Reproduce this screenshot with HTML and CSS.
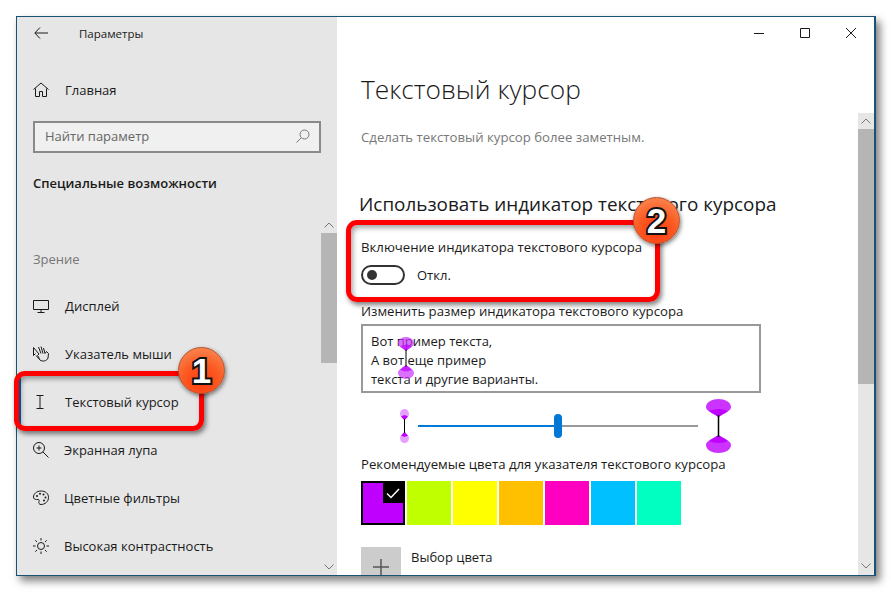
FILE: index.html
```html
<!DOCTYPE html>
<html lang="ru">
<head>
    <meta charset="UTF-8">
    <meta name="viewport" content="width=device-width, initial-scale=1.0">
    <title>Параметры</title>
    <link rel="stylesheet" href="styles.css">
</head>
<body>
    <svg class="defs" width="0" height="0">
        <symbol id="caret" viewBox="0 0 24 54" preserveAspectRatio="none">
            <path class="caret-glow" d="M0 8C0 3 6 0 12 0s12 3 12 8c0 4-6 6-12 10C6 14 0 12 0 8z"/>
            <path class="caret-core" d="M3 12c2-1 6-2 9-2s7 1 9 2c-3 2-6 4-9 6-3-2-6-4-9-6z"/>
            <path class="caret-glow" d="M0 46c0 5 6 8 12 8s12-3 12-8c0-4-6-6-12-10-6 4-12 6-12 10z"/>
            <path class="caret-core" d="M3 42c2 1 6 2 9 2s7-1 9-2c-3-2-6-4-9-6-3 2-6 4-9 6z"/>
            <path class="caret-line" d="M12 16V38"/>
        </symbol>
    </svg>

    <div class="window">
        <aside class="sidebar">
            <div class="sidebar-body">
                <div class="app-title">
                    <svg class="back" width="14" height="12" viewBox="0 0 14 12"><path d="M6 .5L.8 6 6 11.500M1 6H14"/></svg>
                    <span>Параметры</span>
                </div>

                <a class="nav-item home">
                    <svg class="icon" width="16" height="16" viewBox="0 0 16 16"><path d="M.5 7.500L8 1l7.500 6.500M2.500 6.500V14.500H6.500V9.500H9.500V14.500H13.500V6.500"/></svg>
                    <span>Главная</span>
                </a>

                <div class="search">
                    <span>Найти параметр</span>
                    <svg width="14" height="14" viewBox="0 0 14 14"><circle cx="8.500" cy="5.500" r="4.500"/><path d="M5.300 8.700L.5 13.500"/></svg>
                </div>

                <h2 class="group-title">Специальные возможности</h2>
                <div class="group-label">Зрение</div>

                <a class="nav-item">
                    <svg class="icon" width="16" height="16" viewBox="0 0 16 16"><path d="M.5 2.500H15.500V11.500H.5zM8 11.500V14.500M4.500 14.500H11.500"/></svg>
                    <span>Дисплей</span>
                </a>
                <a class="nav-item">
                    <svg class="icon" width="16" height="16" viewBox="0 0 16 16"><path d="M.5 1.500L6 8 4.500 9.500 6.500 12.500M.5 1.500V9.500L2.500 7.500M5.500 1L8 7.500M8 .5L10 7.500M10.500 2L12 7.500 13.500 5.500 15.500 7.500 15 12C14 15 9.500 16 7 14L3 9.500"/></svg>
                    <span>Указатель мыши</span>
                </a>
                <a class="nav-item is-active">
                    <svg class="icon" width="16" height="16" viewBox="0 0 16 16"><path d="M3.500 1.500H10.500M7 1.500V14.500M3.500 14.500H10.500"/></svg>
                    <span>Текстовый курсор</span>
                </a>
                <a class="nav-item tight">
                    <svg class="icon" width="16" height="16" viewBox="0 0 16 16"><circle cx="6" cy="6" r="5.500"/><path d="M9.800 9.800L15.500 15.500M3.500 6H8.500M6 3.500V8.500"/></svg>
                    <span>Экранная лупа</span>
                </a>
                <a class="nav-item tight">
                    <svg class="icon" width="16" height="16" viewBox="0 0 16 16"><path d="M8 1C3.500 1 .5 4 .5 7c0 1.500 1 2.500 3 2.500h1.500c1.200 0 1.500 1 1 2-.5 1.500 0 3 2 3 4 0 7.500-3 7.500-7C15.500 3.500 12.500 1 8 1z"/><circle class="dot" cx="4" cy="6" r="1"/><circle class="dot" cx="7" cy="3.800" r="1"/><circle class="dot" cx="10.500" cy="4.500" r="1"/><circle class="dot" cx="12.500" cy="7.500" r="1"/><circle class="dot" cx="11" cy="10.500" r="1"/></svg>
                    <span>Цветные фильтры</span>
                </a>
                <a class="nav-item tight">
                    <svg class="icon" width="16" height="16" viewBox="0 0 16 16"><circle cx="8" cy="8" r="3.500"/><path d="M8 0V2.500M8 13.500V16M0 8H2.500M13.500 8H16M2.300 2.300L4 4M12 12L13.700 13.700M2.300 13.700L4 12M12 4L13.700 2.300"/></svg>
                    <span>Высокая контрастность</span>
                </a>
            </div>

            <div class="scrollbar side-scroll">
                <div class="scroll-btn"><svg width="10" height="6" viewBox="0 0 10 6"><path d="M.5 5.500L5 1l4.500 4.500"/></svg></div>
                <div class="scroll-thumb"></div>
                <div class="scroll-btn scroll-end"><svg width="10" height="6" viewBox="0 0 10 6"><path d="M.5.5L5 5 9.500.5"/></svg></div>
            </div>
        </aside>

        <main class="main">
            <div class="controls">
                <svg width="10" height="10" viewBox="0 0 10 10"><path d="M0 5.500H10"/></svg>
                <svg width="10" height="10" viewBox="0 0 10 10"><path d="M.5.5H9.500V9.500H.5z"/></svg>
                <svg width="10" height="10" viewBox="0 0 10 10"><path d="M0 0L10 10M10 0L0 10"/></svg>
            </div>

            <div class="main-row">
                <div class="content">
                    <h1>Текстовый курсор</h1>
                    <p class="lead">Сделать текстовый курсор более заметным.</p>

                    <h2>Использовать индикатор текстового курсора</h2>
                    <div class="label toggle-label">Включение индикатора текстового курсора</div>
                    <div class="toggle-row">
                        <span class="toggle"></span>
                        <span>Откл.</span>
                    </div>

                    <div class="label size-label">Изменить размер индикатора текстового курсора</div>
                    <div class="preview">
                        <div>Вот пример текста,</div>
                        <div>А вот еще пример</div>
                        <div>текста и другие варианты.</div>
                        <svg class="preview-caret" width="16" height="42"><use href="#caret"/></svg>
                    </div>

                    <div class="slider-row">
                        <svg class="caret-small" width="9" height="34"><use href="#caret"/></svg>
                        <div class="slider">
                            <div class="slider-fill"></div>
                            <div class="slider-thumb"></div>
                            <div class="slider-rest"></div>
                        </div>
                        <svg class="caret-big" width="25" height="54"><use href="#caret"/></svg>
                    </div>

                    <div class="label colors-label">Рекомендуемые цвета для указателя текстового курсора</div>
                    <div class="swatches">
                        <div class="swatch is-selected">
                            <span class="swatch-check"><svg width="14" height="11" viewBox="0 0 14 11"><path d="M1 5.500L5 9.500 13 1"/></svg></span>
                        </div>
                        <div class="swatch lime"></div>
                        <div class="swatch yellow"></div>
                        <div class="swatch amber"></div>
                        <div class="swatch pink"></div>
                        <div class="swatch sky"></div>
                        <div class="swatch mint"></div>
                    </div>

                    <div class="pick-color">
                        <div class="pick-tile"><svg width="16" height="16" viewBox="0 0 16 16"><path d="M8 0V16M0 8H16"/></svg></div>
                        <span>Выбор цвета</span>
                    </div>
                </div>

                <div class="scrollbar main-scroll">
                    <div class="scroll-btn"><svg width="10" height="6" viewBox="0 0 10 6"><path d="M.5 5.500L5 1l4.500 4.500"/></svg></div>
                    <div class="scroll-thumb"></div>
                    <div class="scroll-btn scroll-end"><svg width="10" height="6" viewBox="0 0 10 6"><path d="M.5.5L5 5 9.500.5"/></svg></div>
                </div>
            </div>
        </main>
    </div>

    <!-- callouts drawn on top of the screenshot -->
    <div class="callout callout-one"></div>
    <div class="callout callout-two"></div>
    <div class="badge badge-one">1</div>
    <div class="badge badge-two">2</div>
</body>
</html>
```

FILE: styles.css
```css
* {
    margin: 0;
    padding: 0;
    box-sizing: border-box;
}

html, body {
    height: 592px;
    overflow: hidden;
}

body {
    background-color: white;
    position: relative;
    padding: 16px 0 0 16px;
    font-family: 'Open Sans', 'Noto Sans', sans-serif;
    font-size: 13px;
    color: #1a1a1a;
}

svg {
    display: block;
    flex: none;
    fill: none;
    stroke: #1a1a1a;
    stroke-width: 1;
}

.defs {
    position: absolute;
}

.window {
    width: 860px;
    height: 560px;
    border: 1px solid #1a5276;
    border-right-width: 2px;
    display: flex;
    overflow: hidden;
    box-shadow: 4px 5px 8px rgba(0, 0, 0, 0.5);
}

/* left column */
.sidebar {
    width: 320px;
    flex: none;
    background-color: #e6e6e6;
    display: flex;
}

.sidebar-body {
    flex: 1;
    min-width: 0;
}

.app-title {
    height: 32px;
    display: flex;
    align-items: center;
    padding-left: 17px;
    font-size: 11.500px;
}

.back {
    margin-right: 31px;
}

.nav-item {
    height: 48px;
    display: flex;
    align-items: center;
    gap: 16px;
    padding-left: 16px;
    border-left: 4px solid transparent;
}

.nav-item.tight {
    gap: 15px;
}

.nav-item .icon {
    margin-left: -4px;
}

.nav-item.home {
    margin-top: 17px;
}

.nav-item.is-active {
    border-left-color: #0067c0;
}

.icon .dot {
    fill: #1a1a1a;
    stroke: none;
}

.search {
    margin: 7px 0 0 16px;
    width: 288px;
    height: 32px;
    border: 2px solid #8a8a8a;
    background-color: #f0f0f0;
    display: flex;
    align-items: center;
    justify-content: space-between;
    padding: 0 9px 2px 10px;
    color: #666;
}

.search svg {
    stroke: #777;
}

.group-title {
    margin: 17px 0 0 16px;
    height: 26px;
    line-height: 26px;
    font-size: 13px;
    font-weight: 600;
}

.group-label {
    margin: 50px 0 10px 16px;
    height: 26px;
    line-height: 26px;
    color: #777;
}

.scrollbar {
    width: 16px;
    flex: none;
    display: flex;
    flex-direction: column;
}

.scrollbar svg {
    stroke: #777;
}

.side-scroll {
    padding-top: 200px;
}

.scroll-btn {
    height: 16px;
    display: flex;
    align-items: center;
    justify-content: center;
}

.scroll-end {
    margin-top: auto;
}

.scroll-thumb {
    background-color: #b5b5b5;
}

.side-scroll .scroll-thumb {
    height: 130px;
}

/* right column */
.main {
    flex: 1;
    min-width: 0;
    display: flex;
    flex-direction: column;
    background-color: white;
}

.controls {
    height: 32px;
    flex: none;
    display: flex;
    align-items: center;
    justify-content: flex-end;
    gap: 36px;
    padding-right: 18px;
}

.main-row {
    flex: 1;
    min-height: 0;
    display: flex;
}

.content {
    flex: 1;
    min-width: 0;
    overflow: hidden;
    padding-left: 24px;
}

.main-scroll {
    margin-top: 64px;
    background-color: #e6e6e6;
}

.main-scroll .scroll-thumb {
    height: 255px;
}

.main-scroll .scroll-end {
    height: 18px;
}

h1 {
    font-size: 26.300px;
    font-weight: 300;
    height: 36px;
    line-height: 36px;
    margin-top: 22px;
}

.lead {
    color: #777;
    font-size: 13.200px;
    height: 20px;
    line-height: 20px;
    margin-top: 20px;
}

.content h2 {
    font-size: 18.900px;
    font-weight: 400;
    height: 26px;
    line-height: 26px;
    margin: 44px 0 0 -2px;
}

.label {
    font-size: 13.200px;
    height: 20px;
    line-height: 20px;
}

.toggle-label {
    margin-top: 20px;
}

.toggle-row {
    display: flex;
    align-items: center;
    gap: 12px;
    height: 20px;
    margin-top: 8px;
}

.toggle {
    width: 44px;
    height: 20px;
    border: 2px solid #333;
    border-radius: 10px;
    display: flex;
    align-items: center;
    padding-left: 4px;
}

.toggle::before {
    content: '';
    width: 10px;
    height: 10px;
    border-radius: 50%;
    background-color: #333;
}

.size-label {
    margin-top: 16px;
}

.preview {
    position: relative;
    width: 400px;
    height: 69px;
    margin-top: 3px;
    border: 2px solid #999;
    padding: 6px 8px;
    line-height: 19px;
}

.preview-caret {
    --glow: rgba(204, 51, 255, 0.7);
    --core: rgba(192, 0, 255, 0.7);
    --line: 1px;
    position: absolute;
    left: 35px;
    top: 11px;
}

.caret-glow {
    fill: var(--glow, #cc33ff);
    stroke: none;
}

.caret-core {
    fill: var(--core, #c000ff);
    stroke: none;
}

.caret-line {
    stroke: #000;
    stroke-width: var(--line, 1.500px);
    vector-effect: non-scaling-stroke;
}

.slider-row {
    display: flex;
    align-items: center;
    height: 54px;
    margin-top: 6px;
    padding-left: 39px;
}

.caret-small {
    --glow: #e8a0ff;
    --line: 1px;
    margin-right: 9px;
}

.caret-big {
    margin-left: 8px;
}

.slider {
    width: 280px;
    height: 24px;
    display: flex;
    align-items: center;
}

.slider-fill {
    width: 136px;
    height: 2px;
    background-color: #0078d7;
}

.slider-thumb {
    width: 8px;
    height: 24px;
    border-radius: 4px;
    background-color: #0078d7;
}

.slider-rest {
    flex: 1;
    height: 2px;
    background-color: #999;
}

.colors-label {
    margin-top: 1px;
}

.swatches {
    display: flex;
    gap: 2px;
    margin-top: 7px;
}

.swatch {
    width: 44px;
    height: 44px;
}

.swatch.is-selected {
    background-color: #c000ff;
    border: 2px solid #000;
    display: flex;
    justify-content: flex-end;
    align-items: flex-start;
}

.swatch-check {
    width: 20px;
    height: 20px;
    background-color: #000;
    display: flex;
    align-items: center;
    justify-content: center;
}

.swatch-check svg {
    stroke: #fff;
    stroke-width: 1.500;
}

.lime { background-color: #bfff00; }
.yellow { background-color: #ffff00; }
.amber { background-color: #ffc000; }
.pink { background-color: #ff00c0; }
.sky { background-color: #00c0ff; }
.mint { background-color: #00ffc0; }

.pick-color {
    display: flex;
    gap: 10px;
    margin-top: 22px;
}

.pick-tile {
    width: 40px;
    height: 40px;
    background-color: #ccc;
    display: flex;
    align-items: center;
    justify-content: center;
}

.pick-tile svg {
    stroke: #555;
    stroke-width: 1.500;
}

.pick-color span {
    line-height: 20px;
}

/* red frames and numbers */
.callout {
    position: absolute;
    border: 5px solid #ff0000;
    border-radius: 11px;
    box-shadow: 2px 3px 5px rgba(0, 0, 0, 0.5), inset 2px 3px 5px rgba(0, 0, 0, 0.35);
}

.callout-one {
    left: 14px;
    top: 371px;
    width: 190px;
    height: 60px;
}

.callout-two {
    left: 346px;
    top: 220px;
    width: 314px;
    height: 82px;
}

.badge {
    position: absolute;
    width: 47px;
    height: 47px;
    border-radius: 50%;
    border: 1px solid #b5502a;
    background: radial-gradient(circle at 50% 75%, #ff3a10 0%, #fb5a22 45%, #f98a55 90%);
    box-shadow: 1px 2px 4px rgba(0, 0, 0, 0.5);
    display: flex;
    align-items: center;
    justify-content: center;
    font-family: 'Liberation Sans', sans-serif;
    font-size: 35px;
    font-weight: 700;
    color: white;
    -webkit-text-stroke: 4px #111;
    paint-order: stroke fill;
}

.badge-one {
    left: 178px;
    top: 347px;
}

.badge-two {
    left: 633px;
    top: 197px;
}
```
